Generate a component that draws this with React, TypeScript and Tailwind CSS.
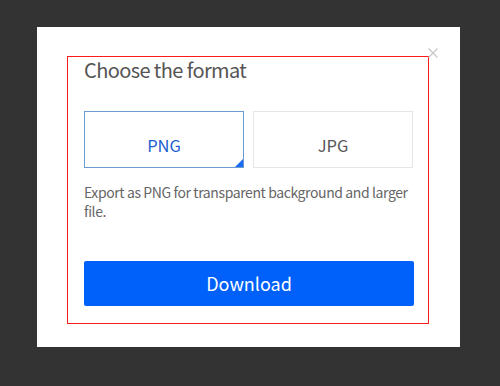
import { useState } from "react"

const formats = ["PNG", "JPG"] as const

export default function App() {
  const [selected, setSelected] = useState<(typeof formats)[number]>("PNG")

  return (
    <div className="w-[500px] h-[386px] bg-[#333333] pl-[37px] pt-[27px] overflow-hidden font-['Noto_Sans_CJK_SC',sans-serif]">
      <div className="relative w-[423px] h-[320px] bg-white pl-[30px] pt-[29px]">
        <button className="absolute left-[391px] top-[21px] w-[10px] h-[10px]">
          <svg viewBox="0 0 10 10" className="w-[10px] h-[10px] block">
            <path d="M0.5 0.5 L9.5 9.5 M9.5 0.5 L0.5 9.5" stroke="#c8c8c8" strokeWidth="1.3" fill="none" />
          </svg>
        </button>
        <div className="w-[362px] h-[268px] border-[1.5px] border-[#ff1a1a] pl-[16px] pr-[15px] flex flex-col">
          <h2 className="mt-[0px] text-[20px] leading-[26px] tracking-[-0.6px] text-[#555]">
            Choose the format
          </h2>
          <div className="mt-[28px] flex gap-[9px]">
            {formats.map(f => {
              const active = selected === f
              return (
                <button
                  key={f}
                  onClick={() => setSelected(f)}
                  className={`relative w-[161px] h-[57px] border text-[16.5px] ${
                    active ? "border-[#6c9bd2] text-[#1a5fd0]" : "border-[#e6e6e6] text-[#555]"
                  }`}
                >
                  <span className="relative top-[6px]">{f}</span>
                  {active && (
                    <span className="absolute right-0 bottom-0 w-0 h-0 border-l-[8px] border-l-transparent border-b-[8px] border-b-[#1a6cf0]" />
                  )}
                </button>
              )
            })}
          </div>
          <p className="mt-[15px] text-[14px] leading-[19px] tracking-[-0.4px] text-[#666]">
            Export as PNG for transparent background and larger file.
          </p>
          <button className="mt-[40px] w-[330px] h-[45px] rounded-[2px] bg-[#0060fa] text-white text-[18px]">
            Download
          </button>
        </div>
      </div>
    </div>
  )
}
